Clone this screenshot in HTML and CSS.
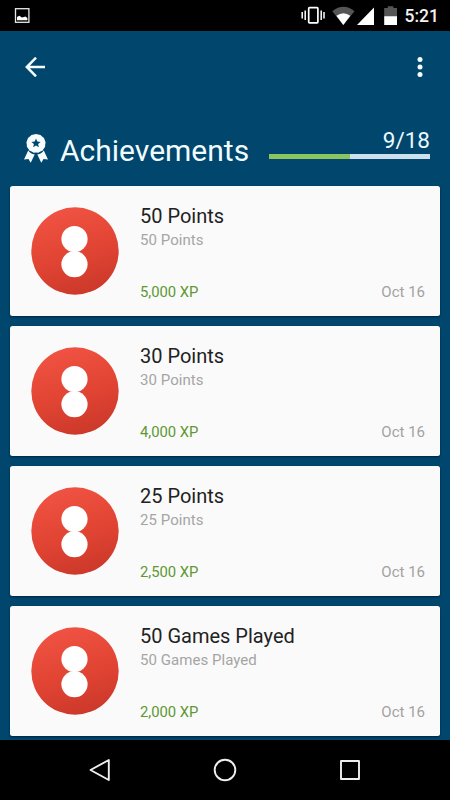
FILE: index.html
```html
<!DOCTYPE html>
<html lang="en">
<head>
<meta charset="utf-8">
<title>Achievements</title>
<link rel="stylesheet" href="styles.css">
</head>
<body>
<div class="screen">
  <div class="status">
    <svg width="450" height="31" viewBox="0 0 450 31" class="status-icons" aria-hidden="true">
      <rect x="15.5" y="8.7" width="13.4" height="13.6" fill="none" stroke="#e8e8e8" stroke-width="1.3"/>
      <path d="M17 20.3V17l2.300-1.300 2.600 1.800 2.100-.4 1.400-.5 2 1.400v2.300z" fill="#fff"/>
      <rect x="308.7" y="7.7" width="9.2" height="15.2" rx=".8" fill="none" stroke="#fff" stroke-width="1.7"/>
      <path d="M302.2 12v6.5M305.2 10.5v9.5M321.2 10.5v9.5M324 12v6.5" stroke="#fff" stroke-width="1.5"/>
      <path d="M332.3 11.2Q343.5 2.5 354.5 11.2L343.3 25z" fill="#555"/>
      <path d="M336.4 15.8Q343.5 10.8 350.3 15.8L343.3 25z" fill="#fff"/>
      <path d="M374 7.5V25H357z" fill="#fff"/>
      <path d="M384.2 8h3.6V6.2h5.6V8h3.6v8.5h-12.8z" fill="#555"/>
      <path d="M384.2 16.2H397V25h-12.8z" fill="#fff"/>
    </svg>
    <span class="clock">5:21</span>
  </div>
  <header class="header">
    <div class="toolbar">
      <svg width="20" height="20" viewBox="0 0 20 20" aria-hidden="true"><path d="M20 10H2M11 .7L1.800 10 11 19.300" fill="none" stroke="#f4fdff" stroke-width="2.500"/></svg>
      <svg width="6" height="22" viewBox="0 0 6 22" fill="#f4fdff" aria-hidden="true"><circle cx="3" cy="3.5" r="2.5"/><circle cx="3" cy="11" r="2.5"/><circle cx="3" cy="18.5" r="2.5"/></svg>
    </div>
    <div class="heading">
      <svg class="medal" width="26" height="30" viewBox="0 0 26 30" fill="#f7fdff" aria-hidden="true">
        <path d="M5.2 16.5L1 25.6l4.500-.6 2.200 3.800 4-8.300Q7.500 20 5.200 16.500zM20.800 16.500L25 25.600l-4.500-.6-2.200 3.800-4-8.300Q18.500 20 20.800 16.500z"/>
        <path fill-rule="evenodd" d="M13 0l2.200.6 2.300.3 1.600 1.600 1.900 1.400.7 2.200.9 2.100-.4 2.300-.1 2.300-1.400 1.900-1.200 2-2.200.9-2 1.100-2.300-.1-2.300.1-2-1.100-2.200-.9-1.200-2-1.400-1.900-.1-2.300-.4-2.300.9-2.100.7-2.200 1.900-1.400 1.600-1.600 2.300-.3zM13 4.600l-1.300 3-3.300.3 2.500 2.200-.7 3.200 2.800-1.700 2.800 1.700-.7-3.200 2.500-2.200-3.300-.3z"/>
      </svg>
      <h1 class="title">Achievements</h1>
      <div class="progress">
        <span class="count">9/18</span>
        <div class="track"><div class="fill"></div></div>
      </div>
    </div>
  </header>
  <svg width="0" height="0" class="defs" aria-hidden="true">
    <defs>
      <linearGradient id="red" x1=".35" y1="0" x2=".65" y2="1"><stop offset="0" stop-color="#f05343"/><stop offset=".5" stop-color="#e34534"/><stop offset="1" stop-color="#cb382a"/></linearGradient>
      <symbol id="badge" viewBox="0 0 88 88"><circle cx="44" cy="44" r="43.700" fill="url(#red)"/><circle cx="43.500" cy="32" r="13.100" fill="#fff"/><circle cx="43.500" cy="57.200" r="13.100" fill="#fff"/></symbol>
    </defs>
  </svg>
  <main class="list">
    <article class="card">
      <svg class="badge"><use href="#badge"/></svg>
      <div class="info"><h2>50 Points</h2><p>50 Points</p><div class="meta"><span class="xp">5,000 XP</span><span class="date">Oct 16</span></div></div>
    </article>
    <article class="card">
      <svg class="badge"><use href="#badge"/></svg>
      <div class="info"><h2>30 Points</h2><p>30 Points</p><div class="meta"><span class="xp">4,000 XP</span><span class="date">Oct 16</span></div></div>
    </article>
    <article class="card">
      <svg class="badge"><use href="#badge"/></svg>
      <div class="info"><h2>25 Points</h2><p>25 Points</p><div class="meta"><span class="xp">2,500 XP</span><span class="date">Oct 16</span></div></div>
    </article>
    <article class="card">
      <svg class="badge"><use href="#badge"/></svg>
      <div class="info"><h2>50 Games Played</h2><p>50 Games Played</p><div class="meta"><span class="xp">2,000 XP</span><span class="date">Oct 16</span></div></div>
    </article>
  </main>
  <nav class="nav">
    <svg width="24" height="24" viewBox="0 0 24 24"><path d="M20.800 2v20L2.500 12z"/></svg>
    <svg width="24" height="24" viewBox="0 0 24 24"><circle cx="12" cy="12" r="10.300"/></svg>
    <svg width="24" height="24" viewBox="0 0 24 24"><path d="M3 3h18v18H3z"/></svg>
  </nav>
</div>
</body>
</html>
```
FILE: styles.css
```css
* { box-sizing: border-box; }
body, h1, h2, p { margin: 0; font-weight: 400; }
body { font-family: Roboto, "Liberation Sans", sans-serif; background: #00466d; }
svg { display: block; flex: none; }
.screen { width: 450px; height: 800px; display: flex; flex-direction: column; overflow: hidden; background: #00466d; }
.status { position: relative; height: 31px; flex: none; background: #000; display: flex; justify-content: flex-end; padding-right: 11px; }
.status-icons { position: absolute; left: 0; top: 0; }
.clock { color: #f2f2f2; font-size: 17.5px; font-weight: 500; line-height: 33px; }
.header { height: 155px; flex: none; }
.toolbar { height: 71px; display: flex; align-items: center; justify-content: space-between; padding: 0 27px 0 25px; }
.heading { display: flex; align-items: flex-start; padding: 0 20px 0 23px; }
.medal { margin-top: 32px; }
.title { margin-left: 11px; padding-top: 31px; color: #f1fcff; font-size: 30px; line-height: 36px; letter-spacing: 0; }
.progress { width: 161px; flex: none; margin-left: auto; padding-top: 25px; display: flex; flex-direction: column; align-items: flex-end; }
.count { color: #ecf9ff; font-size: 22.5px; line-height: 27px; }
.track { width: 161px; height: 5px; background: #cfe0ed; }
.fill { width: 50%; height: 5px; background: #8bc560; }
.defs { position: absolute; }
.list { height: 554px; flex: none; padding: 0 10px; display: flex; flex-direction: column; gap: 10px; }
.card { height: 130px; flex: none; display: flex; background: #fafafa; border-radius: 2.5px; box-shadow: 0 1px 2px rgba(0, 20, 40, .65); padding: 0 15px 0 21px; }
.badge { width: 88px; height: 88px; margin-top: 21px; }
.info { flex: 1; margin-left: 21px; padding-top: 17px; display: flex; flex-direction: column; }
h2 { color: #222; font-size: 20px; line-height: 26px; }
p { margin-top: 1px; color: #a5a5a5; font-size: 15px; line-height: 20px; letter-spacing: .05px; }
.meta { margin-top: 32px; display: flex; align-items: baseline; justify-content: space-between; font-size: 15px; line-height: 20px; }
.xp { color: #5d9831; font-size: 14.8px; }
.date { color: #a2a2a2; }
.nav { height: 60px; flex: none; background: #000; display: flex; justify-content: space-between; align-items: center; padding: 0 88px; }
.nav svg { fill: none; stroke: #efefef; stroke-width: 1.9; stroke-linejoin: round; }
```
